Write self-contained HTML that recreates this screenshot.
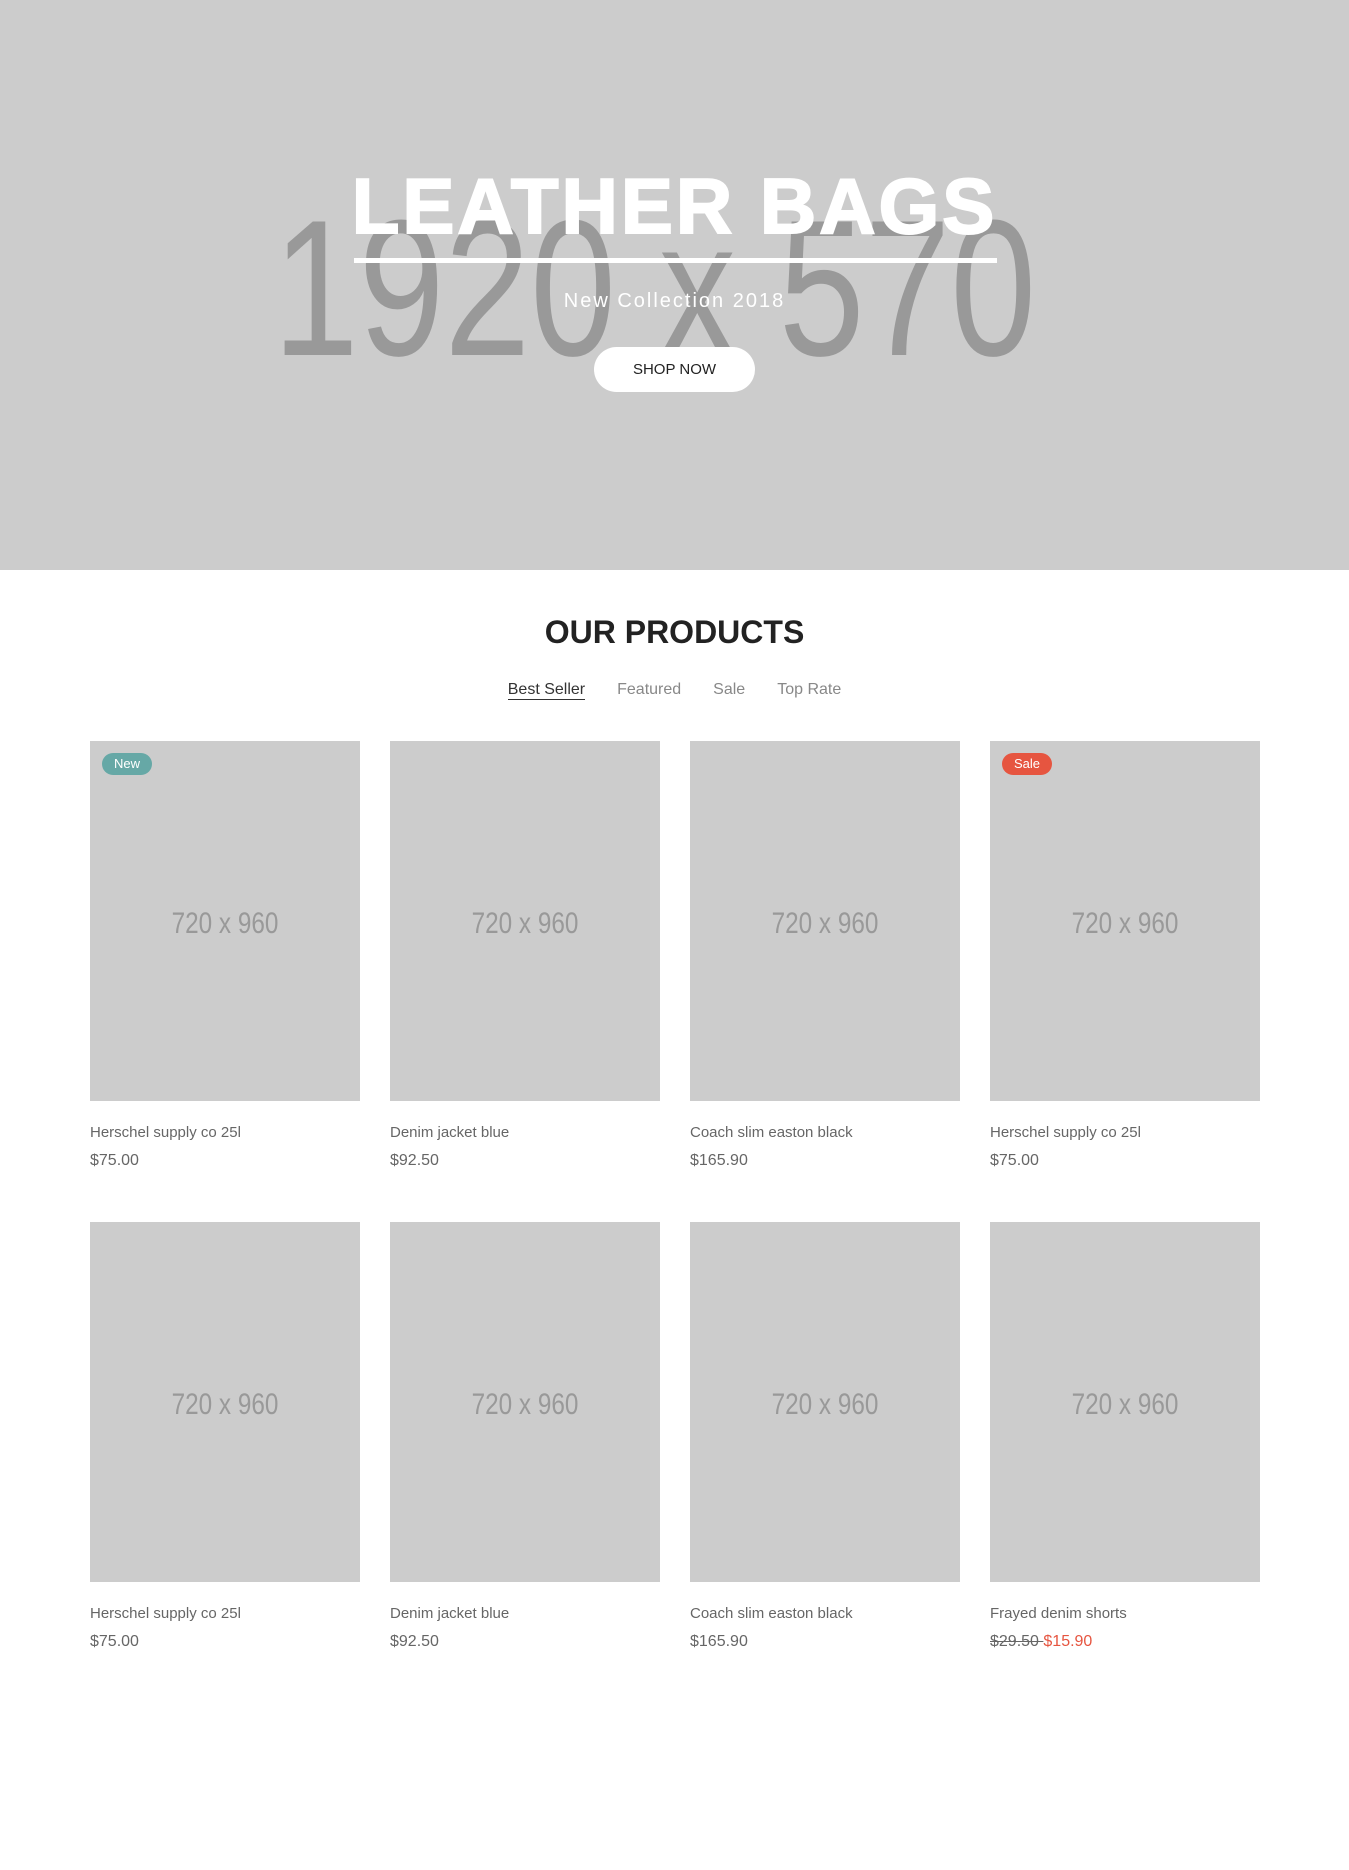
<!DOCTYPE html>
<html><head><meta charset="utf-8"><style>
*{margin:0;padding:0;box-sizing:border-box}
body{width:1349px;height:1870px;background:#fff;font-family:"Liberation Sans",sans-serif;position:relative;overflow:hidden}
.hero{position:absolute;left:0;top:0;width:1349px;height:570px;background:#ccc}
.ph{position:absolute;left:0;width:100%;text-align:center;color:#999;white-space:nowrap}
.big{left:-20px;top:182px;font-size:194px;line-height:214px;transform:scaleX(0.795)}
.title{position:absolute;left:0;width:100%;top:161px;text-align:center;color:#fff;font-weight:900;font-size:78px;line-height:90px;letter-spacing:3px;-webkit-text-stroke:2px #fff}
.line{position:absolute;left:354px;top:258px;width:643px;height:5px;background:#fff}
.sub{position:absolute;left:0;width:100%;top:290px;text-align:center;color:#fff;font-size:20px;letter-spacing:2px}
.btn{position:absolute;left:594px;top:347px;width:161px;height:45px;border-radius:23px;background:#fff;color:#222;font-size:15px;line-height:46px;text-align:center}
h2{position:absolute;left:0;width:100%;top:612px;text-align:center;font-size:32px;font-weight:bold;color:#222;line-height:40px}
.tabs{position:absolute;left:0;width:100%;top:681px;text-align:center;font-size:16px;color:#888}
.tabs span{margin:0 16px}
.tabs .a{color:#333;border-bottom:1px solid #333;padding-bottom:1px}
.card{position:absolute;width:270px}
.img{position:relative;width:270px;height:360px;background:#ccc}
.img .t{position:absolute;left:0;top:166px;width:100%;text-align:center;color:#999;font-size:30px;transform:scaleX(0.81)}
.badge{position:absolute;left:12px;top:12px;width:50px;height:22px;border-radius:11px;color:#fff;font-size:13px;line-height:22px;text-align:center}
.name{margin-top:22px;font-size:15px;color:#666;line-height:20px}
.price{margin-top:8px;font-size:16px;color:#666;line-height:20px}
</style></head><body>
<div class="hero">
<div class="ph big">1920 x 570</div>
<div class="title">LEATHER BAGS</div>
<div class="line"></div>
<div class="sub">New Collection 2018</div>
<div class="btn">SHOP NOW</div>
</div>
<h2>OUR PRODUCTS</h2>
<div class="tabs"><span class="a">Best Seller</span><span>Featured</span><span>Sale</span><span>Top Rate</span></div>

<div class="card" style="left:90px;top:741px"><div class="img"><div class="t">720 x 960</div><div class="badge" style="background:#66a8a6">New</div></div><div class="name">Herschel supply co 25l</div><div class="price">$75.00</div></div>
<div class="card" style="left:390px;top:741px"><div class="img"><div class="t">720 x 960</div></div><div class="name">Denim jacket blue</div><div class="price">$92.50</div></div>
<div class="card" style="left:690px;top:741px"><div class="img"><div class="t">720 x 960</div></div><div class="name">Coach slim easton black</div><div class="price">$165.90</div></div>
<div class="card" style="left:990px;top:741px"><div class="img"><div class="t">720 x 960</div><div class="badge" style="background:#e65540">Sale</div></div><div class="name">Herschel supply co 25l</div><div class="price">$75.00</div></div>

<div class="card" style="left:90px;top:1222px"><div class="img"><div class="t">720 x 960</div></div><div class="name">Herschel supply co 25l</div><div class="price">$75.00</div></div>
<div class="card" style="left:390px;top:1222px"><div class="img"><div class="t">720 x 960</div></div><div class="name">Denim jacket blue</div><div class="price">$92.50</div></div>
<div class="card" style="left:690px;top:1222px"><div class="img"><div class="t">720 x 960</div></div><div class="name">Coach slim easton black</div><div class="price">$165.90</div></div>
<div class="card" style="left:990px;top:1222px"><div class="img"><div class="t">720 x 960</div></div><div class="name">Frayed denim shorts</div><div class="price"><s>$29.50 </s> <span style="color:#e65540">$15.90</span></div></div>
</body></html>
